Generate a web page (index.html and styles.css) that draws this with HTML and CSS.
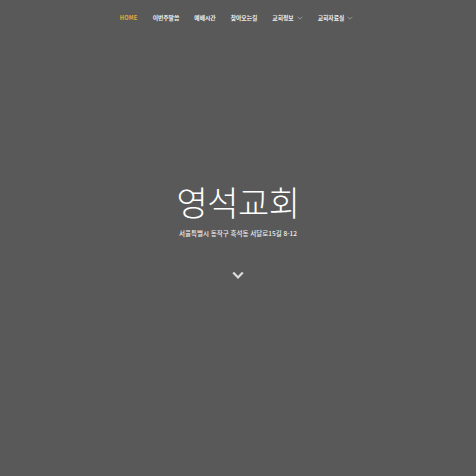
FILE: index.html
```html
<!DOCTYPE html>
<html lang="ko">
<head>
<meta charset="utf-8">
<title>영석교회</title>
<link rel="stylesheet" href="styles.css">
</head>
<body>
<div class="page">
  <nav class="nav">
    <a class="nav-item active">HOME</a>
    <a class="nav-item">이번주말씀</a>
    <a class="nav-item">예배시간</a>
    <a class="nav-item">찾아오는길</a>
    <a class="nav-item">교회정보<svg class="caret" viewBox="0 0 10 6"><path d="M1 1 L5 5 L9 1" fill="none" stroke="currentColor" stroke-width="1"/></svg></a>
    <a class="nav-item">교회자료실<svg class="caret" viewBox="0 0 10 6"><path d="M1 1 L5 5 L9 1" fill="none" stroke="currentColor" stroke-width="1"/></svg></a>
  </nav>
  <main class="hero">
    <h1 class="title">영석교회</h1>
    <p class="address">서울특별시 동작구 흑석동 서달로15길 8-12</p>
    <svg class="down" viewBox="0 0 12 9"><path d="M1.2 1.5 L6 6.5 L10.8 1.5" fill="none" stroke="currentColor" stroke-width="2.2"/></svg>
  </main>
</div>
</body>
</html>
```
FILE: styles.css
```css
html, body {
  margin: 0;
  padding: 0;
  background: #595959;
}
body {
  font-family: "Noto Sans CJK KR", "Noto Sans", sans-serif;
  color: #f2f2f2;
}
.page {
  width: 476px;
  height: 476px;
  display: flex;
  flex-direction: column;
}
.nav {
  display: flex;
  justify-content: center;
  align-items: center;
  gap: 15px;
  padding-top: 12px;
  height: 12px;
  padding-right: 3px;
}
.nav-item {
  font-size: 5.8px;
  font-weight: 700;
  color: #f0f0f0;
  display: flex;
  align-items: center;
  line-height: 12px;
}
.nav-item.active {
  color: #e9a93c;
  font-size: 5.6px;
  letter-spacing: 0.3px;
}
.caret {
  width: 6px;
  height: 4px;
  margin-left: 3px;
  color: #bdbdbd;
}
.hero {
  display: flex;
  flex-direction: column;
  align-items: center;
  padding-top: 157px;
}
.title {
  margin: 0;
  font-size: 34px;
  font-weight: 300;
  line-height: 42px;
  color: #ffffff;
  letter-spacing: -0.5px;
}
.address {
  margin: 5px 0 0;
  font-size: 6.5px;
  line-height: 10px;
  font-weight: 500;
  color: #eeeeee;
}
.down {
  margin-top: 33px;
  width: 12px;
  height: 9px;
  color: #dddddd;
}
```
